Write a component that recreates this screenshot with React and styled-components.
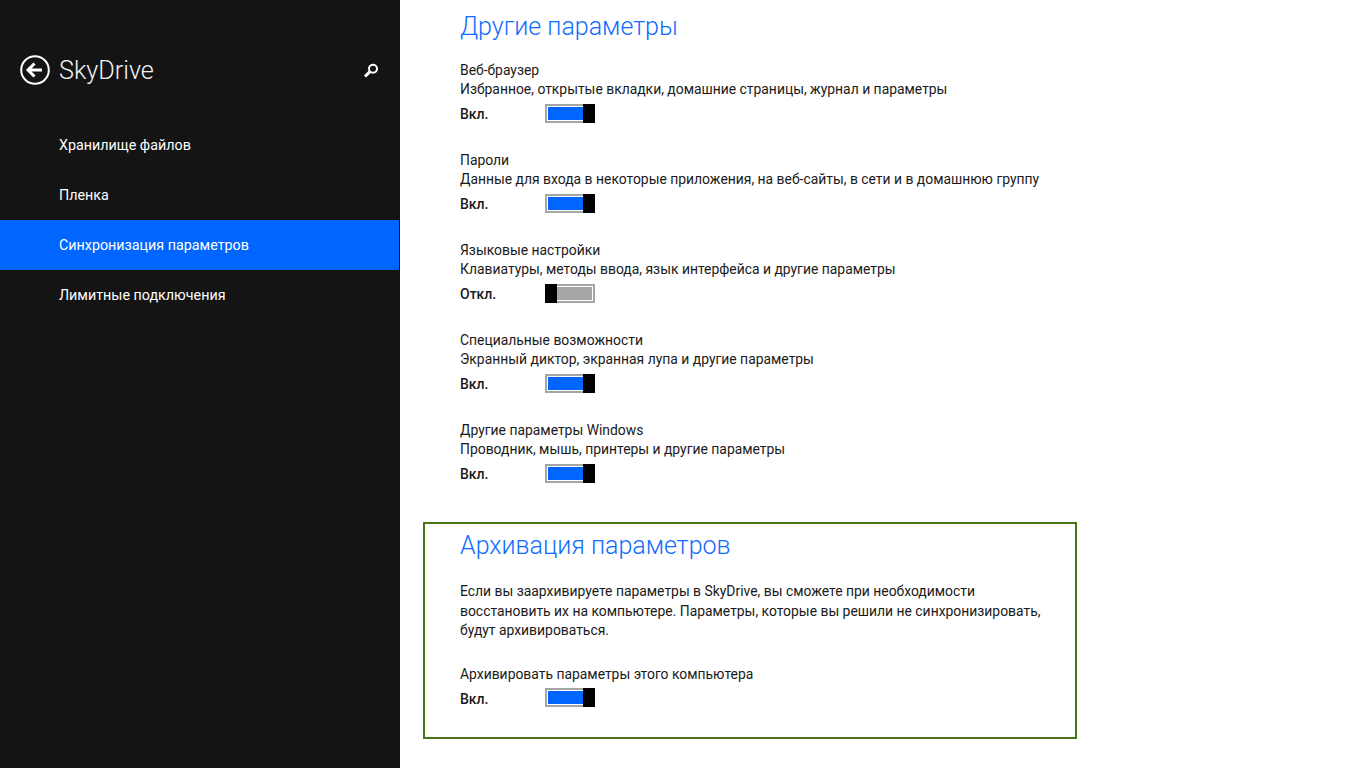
import React from 'react'
import styled, { createGlobalStyle } from 'styled-components'

const GlobalStyle = createGlobalStyle`
  html, body {
    margin: 0;
    padding: 0;
    height: 100%;
    overflow: hidden;
    background: #fff;
    font-family: Roboto, "Noto Sans", sans-serif;
  }
`

const Page = styled.div`
  display: flex;
  width: 1366px;
  height: 768px;
  overflow: hidden;
`

const Sidebar = styled.aside`
  flex: 0 0 400px;
  background: #141414;
  color: #fff;
`

const SideHeader = styled.div`
  display: flex;
  align-items: center;
  height: 30px;
  padding: 55px 20px 35px 20px;
`

const BackButton = styled.svg`
  width: 30px;
  height: 30px;
  flex: none;
`

const AppTitle = styled.h1`
  margin: 2px 0 0 9px;
  font-size: 25.2px;
  font-weight: 300;
  line-height: 32px;
  color: #f2f2f2;
`

const SearchIcon = styled.svg`
  width: 16px;
  height: 16px;
  margin-left: auto;
  margin-right: 1px;
`

const NavItem = styled.div`
  height: 50px;
  width: 399px;
  padding-left: 59px;
  box-sizing: border-box;
  line-height: 51px;
  font-size: 14.3px;
  background: ${p => (p.$active ? '#0066ff' : 'transparent')};
`

const Content = styled.main`
  flex: 1;
  padding: 11px 0 0 23px;
  color: #1a1a1a;
`

const Inner = styled.div`
  width: 654px;
  padding-left: 37px;
  box-sizing: border-box;
`

const Heading = styled.h2`
  margin: 0;
  font-size: 25px;
  font-weight: 300;
  line-height: 32px;
  color: #0f6cff;
`

const Groups = styled.div`
  display: flex;
  flex-direction: column;
  gap: 28px;
  margin-top: 18px;
`

const Line = styled.div`
  font-size: 13.9px;
  line-height: 19px;
  white-space: nowrap;
`

const ToggleRow = styled.div`
  display: flex;
  align-items: center;
  height: 20px;
  margin-top: 4px;
`

const State = styled.span`
  flex: 0 0 85px;
  margin-top: 2px;
  font-size: 14px;
  font-weight: 500;
`

const Track = styled.div`
  width: 50px;
  height: 19px;
  box-sizing: border-box;
  position: relative;
  border: 2px solid #a6a6a6;
  background: ${p => (p.$on ? '#0066ff' : '#a6a6a6')};
  box-shadow: inset 0 0 0 1px #fff;
`

const Thumb = styled.div`
  position: absolute;
  top: -2px;
  ${p => (p.$on ? 'right: -2px;' : 'left: -2px;')}
  width: 12px;
  height: 19px;
  background: #000;
`

const BackupBox = styled.section`
  width: 654px;
  height: 217px;
  box-sizing: border-box;
  margin-top: 39px;
  border: 2px solid #4a7317;
  padding: 6px 0 0 35px;
`

const Para = styled.p`
  margin: 20px 0 0;
  width: 590px;
  font-size: 13.9px;
  line-height: 19.5px;
`

const BackupLabel = styled(Line)`
  margin-top: 24px;
`

const Toggle = ({ on }) => (
  <ToggleRow>
    <State>{on ? 'Вкл.' : 'Откл.'}</State>
    <Track $on={on}>
      <Thumb $on={on} />
    </Track>
  </ToggleRow>
)

const groups = [
  { title: 'Веб-браузер', text: 'Избранное, открытые вкладки, домашние страницы, журнал и параметры', on: true },
  { title: 'Пароли', text: 'Данные для входа в некоторые приложения, на веб-сайты, в сети и в домашнюю группу', on: true },
  { title: 'Языковые настройки', text: 'Клавиатуры, методы ввода, язык интерфейса и другие параметры', on: false },
  { title: 'Специальные возможности', text: 'Экранный диктор, экранная лупа и другие параметры', on: true },
  { title: 'Другие параметры Windows', text: 'Проводник, мышь, принтеры и другие параметры', on: true },
]

const nav = ['Хранилище файлов', 'Пленка', 'Синхронизация параметров', 'Лимитные подключения']

export default function App () {
  return (
    <Page>
      <GlobalStyle />
      <Sidebar>
        <SideHeader>
          <BackButton viewBox='0 0 30 30' fill='none' stroke='#fff'>
            <circle cx='15' cy='15' r='13.8' strokeWidth='2' />
            <path d='M8 15h14M14.5 8.5L8 15l6.5 6.5' strokeWidth='3' />
          </BackButton>
          <AppTitle>SkyDrive</AppTitle>
          <SearchIcon viewBox='0 0 16 16' fill='none' stroke='#fff'>
            <circle cx='10' cy='6.7' r='4' strokeWidth='2' />
            <path d='M7 9.7l-5 4.8' strokeWidth='3' />
          </SearchIcon>
        </SideHeader>
        {nav.map((item, i) => (
          <NavItem key={item} $active={i === 2}>{item}</NavItem>
        ))}
      </Sidebar>
      <Content>
        <Inner>
          <Heading>Другие параметры</Heading>
          <Groups>
            {groups.map(g => (
              <div key={g.title}>
                <Line>{g.title}</Line>
                <Line>{g.text}</Line>
                <Toggle on={g.on} />
              </div>
            ))}
          </Groups>
        </Inner>
        <BackupBox>
          <Heading>Архивация параметров</Heading>
          <Para>Если вы заархивируете параметры в SkyDrive, вы сможете при необходимости восстановить их на компьютере. Параметры, которые вы решили не синхронизировать, будут архивироваться.</Para>
          <BackupLabel>Архивировать параметры этого компьютера</BackupLabel>
          <Toggle on />
        </BackupBox>
      </Content>
    </Page>
  )
}
